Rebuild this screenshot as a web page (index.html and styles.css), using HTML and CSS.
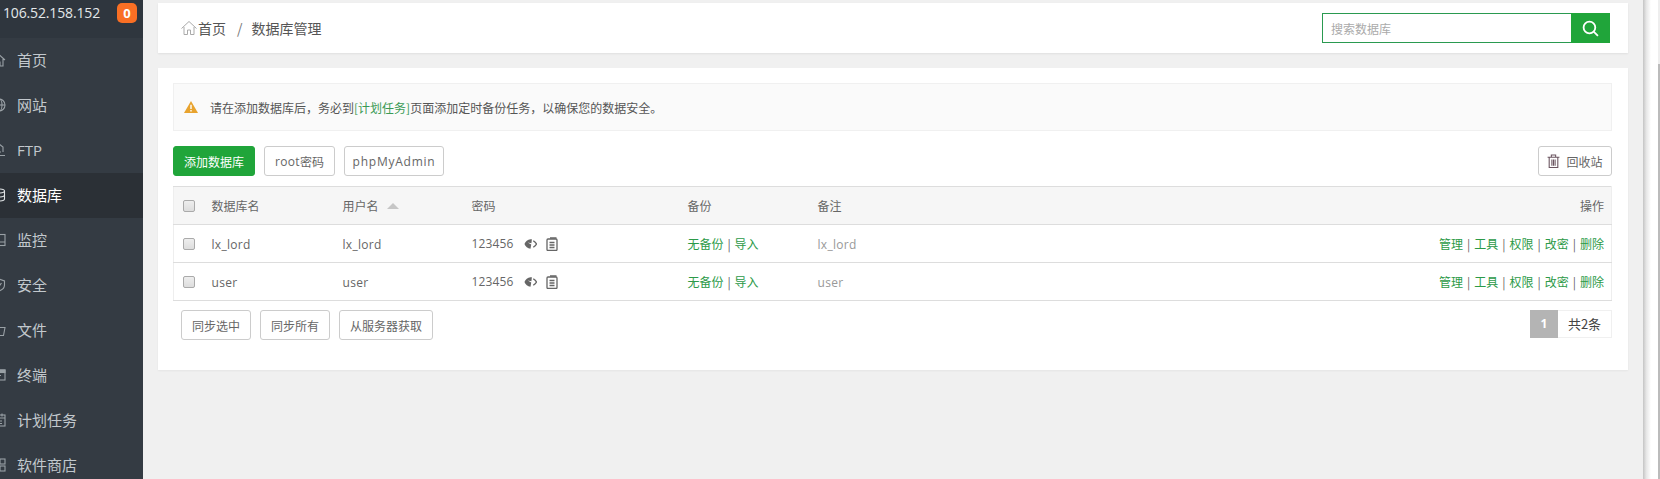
FILE: index.html
```html
<!DOCTYPE html>
<html lang="zh-CN">
<head>
<meta charset="utf-8">
<title>数据库管理</title>
<link rel="stylesheet" href="styles.css">
</head>
<body>
<aside class="sidebar">
  <div class="server"><span class="ip">106.52.158.152</span><span class="badge">0</span></div>
  <nav class="nav">
    <a class="nav-item"><svg class="nav-icon" viewBox="0 0 14 14"><path d="M1 7l6-5.500L13 7M3 6v7h3V9h2v4h3V6"/></svg>首页</a>
    <a class="nav-item"><svg class="nav-icon" viewBox="0 0 14 14"><circle cx="7" cy="7" r="6"/><ellipse cx="7" cy="7" rx="3" ry="6"/><path d="M1 7h12"/></svg>网站</a>
    <a class="nav-item"><svg class="nav-icon" viewBox="0 0 14 14"><path d="M3 9V4l4-3 4 3v5M1 12.500h12M5 9h4M7 3v5"/></svg><span class="lat-nav">FTP</span></a>
    <a class="nav-item active"><svg class="nav-icon" viewBox="0 0 14 14"><ellipse cx="7" cy="3" rx="5.500" ry="2"/><path d="M1.500 3v8c0 1 2.500 2 5.500 2s5.500-1 5.500-2V3M1.500 7c0 1 2.500 2 5.500 2s5.500-1 5.500-2"/></svg>数据库</a>
    <a class="nav-item"><svg class="nav-icon" viewBox="0 0 14 14"><rect x="1" y="1.500" width="12" height="11"/><path d="M1 9h12M4 12.500V9"/></svg>监控</a>
    <a class="nav-item"><svg class="nav-icon" viewBox="0 0 14 14"><path d="M7 1l5.500 2v4c0 3-2.500 5-5.500 6-3-1-5.500-3-5.500-6V3z"/><path d="M4.500 7l2 2 3-4"/></svg>安全</a>
    <a class="nav-item"><svg class="nav-icon" viewBox="0 0 14 14"><path d="M1 3h5l1.500 1.500H13l-1.500 8h-10z"/></svg>文件</a>
    <a class="nav-item"><svg class="nav-icon" viewBox="0 0 14 14"><rect class="fill" x="1" y="2" width="12" height="2.500"/><rect x="1" y="2" width="12" height="10"/><path d="M4 7.500h5"/></svg>终端</a>
    <a class="nav-item"><svg class="nav-icon" viewBox="0 0 14 14"><rect x="2" y="2" width="11" height="11"/><path d="M2 5h11M5 8h5M5 10.500h5M5 .5v3M10 .5v3"/></svg>计划任务</a>
    <a class="nav-item"><svg class="nav-icon" viewBox="0 0 14 14"><rect x="1" y="1" width="5" height="5"/><rect x="1" y="8" width="5" height="5"/><rect x="8" y="1" width="5" height="5"/><rect x="8" y="8" width="5" height="5"/></svg>软件商店</a>
  </nav>
</aside>

<main class="main">
  <header class="topbar">
    <div class="crumbs">
      <svg class="crumb-home" viewBox="0 0 16 16"><path d="M.5 8.500L8 1.500l7.500 7M3 7v7.500h3.500V10h3v4.500H13V7"/></svg>
      <span class="crumb-root">首页</span>
      <span class="crumb-sep">/</span>
      <span class="crumb-cur">数据库管理</span>
    </div>
    <form class="search">
      <input class="search-input" type="text" placeholder="搜索数据库">
      <button class="search-btn" type="button" aria-label="搜索"><svg class="search-icon" viewBox="0 0 16 16"><circle cx="7" cy="7" r="5.500"/><path d="M11 11l4 4"/></svg></button>
    </form>
  </header>

  <section class="card">
    <div class="alert">
      <svg class="warn" viewBox="0 0 14 12"><path class="warn-bg" d="M7 0l7 12H0z"/><path class="warn-fg" d="M6.300 3.800h1.400v4.200H6.300zM6.300 9h1.400v1.400H6.300z"/></svg>
      <span>请在添加数据库后，务必到<a class="link">[计划任务]</a>页面添加定时备份任务，以确保您的数据安全。</span>
    </div>

    <div class="toolbar">
      <button class="btn btn-primary btn-add" type="button">添加数据库</button>
      <button class="btn btn-root" type="button"><span class="lat">root</span>密码</button>
      <button class="btn btn-pma" type="button"><span class="lat lat-wide">phpMyAdmin</span></button>
      <button class="btn btn-recycle" type="button"><svg class="trash" viewBox="0 0 12 13"><path d="M.5 3h11M4 3V1h4v2M2 3v9.500h8V3M4.500 5v6M6 5v6M7.500 5v6"/></svg>回收站</button>
    </div>

    <table class="grid">
      <colgroup>
        <col class="c-check"><col class="c-name"><col class="c-user"><col class="c-pass"><col class="c-backup"><col class="c-note"><col class="c-ops">
      </colgroup>
      <thead>
        <tr>
          <th><input class="check" type="checkbox"></th>
          <th>数据库名</th>
          <th>用户名<span class="sort"></span></th>
          <th>密码</th>
          <th>备份</th>
          <th>备注</th>
          <th class="right">操作</th>
        </tr>
      </thead>
      <tbody>
        <tr>
          <td><input class="check" type="checkbox"></td>
          <td><span class="lat">lx_lord</span></td>
          <td><span class="lat">lx_lord</span></td>
          <td><div class="pass"><span class="lat lat-num">123456</span>
            <svg class="eye" viewBox="0 0 14 12"><path d="M7 1C4 1 1.500 3.500 .5 6c1 2.500 3.500 5 6.500 5l.8-4.500L4 4.500l4 .8L8.500 1z"/><path class="eye-r" d="M10 2.500c1.500 1 2.800 2.200 3.500 3.500-.7 1.300-2 2.500-3.500 3.500"/></svg>
            <svg class="copy" viewBox="0 0 12 14"><rect x="1" y="2" width="10" height="11.500" rx="1"/><path d="M4 1h6.500M3.500 5.500h5M3.500 8h5M3.500 10.500h5"/></svg>
          </div></td>
          <td class="backup"><a class="link">无备份</a> | <a class="link">导入</a></td>
          <td class="note"><span class="lat">lx_lord</span></td>
          <td class="right"><a class="link">管理</a> | <a class="link">工具</a> | <a class="link">权限</a> | <a class="link">改密</a> | <a class="link">删除</a></td>
        </tr>
        <tr>
          <td><input class="check" type="checkbox"></td>
          <td><span class="lat">user</span></td>
          <td><span class="lat">user</span></td>
          <td><div class="pass"><span class="lat lat-num">123456</span>
            <svg class="eye" viewBox="0 0 14 12"><path d="M7 1C4 1 1.500 3.500 .5 6c1 2.500 3.500 5 6.500 5l.8-4.500L4 4.500l4 .8L8.500 1z"/><path class="eye-r" d="M10 2.500c1.500 1 2.800 2.200 3.500 3.500-.7 1.300-2 2.500-3.500 3.500"/></svg>
            <svg class="copy" viewBox="0 0 12 14"><rect x="1" y="2" width="10" height="11.500" rx="1"/><path d="M4 1h6.500M3.500 5.500h5M3.500 8h5M3.500 10.500h5"/></svg>
          </div></td>
          <td class="backup"><a class="link">无备份</a> | <a class="link">导入</a></td>
          <td class="note"><span class="lat">user</span></td>
          <td class="right"><a class="link">管理</a> | <a class="link">工具</a> | <a class="link">权限</a> | <a class="link">改密</a> | <a class="link">删除</a></td>
        </tr>
      </tbody>
    </table>

    <div class="footer">
      <div class="footer-btns">
        <button class="btn" type="button">同步选中</button>
        <button class="btn" type="button">同步所有</button>
        <button class="btn" type="button">从服务器获取</button>
      </div>
      <div class="pager"><span class="page-cur">1</span><span class="page-total">共2条</span></div>
    </div>
  </section>
</main>

<div class="edge"><div class="edge-fade"></div><div class="edge-line"></div></div>
</body>
</html>
```

FILE: styles.css
```css
* { box-sizing: border-box; }
html, body { height: 100%; }
body {
  margin: 0;
  display: flex;
  height: 479px;
  overflow: hidden;
  background: #f0f0f0;
  color: #666;
  font: 12px "Noto Sans CJK SC", "Open Sans", sans-serif;
}
a { text-decoration: none; }
button { font: inherit; color: inherit; cursor: pointer; }

.lat { font-family: "Open Sans", "Noto Sans CJK SC", sans-serif; letter-spacing: .3px; }
.lat-wide { letter-spacing: .75px; }
.lat-num { letter-spacing: .15px; }

/* sidebar */
.sidebar { flex: 0 0 143px; background: #343b43; overflow: hidden; }
.server { height: 38px; display: flex; align-items: flex-start; background: #2f363e; padding: 3px 6px 0 3px; justify-content: space-between; }
.ip { font: 14px/20px "Open Sans", sans-serif; color: #e4e8ea; letter-spacing: -.15px; }
.badge { width: 20px; height: 20px; border-radius: 5px; background: #f96f24; color: #fff; font: bold 13px/20px "Open Sans", sans-serif; text-align: center; }
.nav-item { height: 45px; padding-bottom: 2px; display: flex; align-items: center; gap: 11px; color: #c2c8cd; font-size: 15px; }
.nav-item.active { background: #2b3036; color: #fff; }
.nav-icon { flex: none; width: 14px; height: 14px; margin-left: -8px; fill: none; stroke: #9aa1a6; stroke-width: 1.100; }
.nav-icon .fill { fill: #9aa1a6; }
.active .nav-icon { stroke: #dfe2e4; }
.lat-nav { font-family: "Open Sans", sans-serif; }

/* main */
.main { flex: 1; min-width: 0; padding: 3px 15px 0; }
.topbar { height: 50px; background: #fff; box-shadow: 0 1px 2px rgba(0,0,0,.07); display: flex; align-items: center; justify-content: space-between; padding: 0 18px 0 23px; }
.crumbs { display: flex; align-items: center; font-size: 14px; color: #555; }
.crumb-home { width: 16px; height: 16px; fill: none; stroke: #aaa; stroke-width: 1; margin-right: 1px; }
.crumb-sep { margin: 0 9px 0 11px; color: #777; }
.search { display: flex; height: 30px; }
.search-input { width: 249px; height: 30px; border: 1px solid #2a9a50; border-right: 0; outline: 0; padding: 0 8px; font: inherit; background: #fff; }
.search-input::placeholder { color: #aaa; }
.search-btn { width: 39px; border: 0; padding: 0; background: #20a53a; display: flex; align-items: center; justify-content: center; }
.search-icon { width: 17px; height: 17px; fill: none; stroke: #fff; stroke-width: 1.700; }

.card { margin-top: 15px; height: 302px; background: #fff; padding: 15px 16px 15px 15px; box-shadow: 0 1px 2px rgba(0,0,0,.05); }
.alert { height: 48px; display: flex; align-items: center; gap: 12px; padding-left: 10px; background: #fafafa; border: 1px solid #f0f0f0; color: #555; }
.warn { width: 14px; height: 12px; flex: none; }
.warn-bg { fill: #e8a32e; }
.warn-fg { fill: #fff; }
.link { color: #2c9a48; }
.alert .link { color: #3a9a55; }

.toolbar { display: flex; gap: 9px; margin-top: 15px; height: 30px; }
.btn { height: 30px; padding: 0 11px; background: #fff; border: 1px solid #ccc; border-radius: 3px; color: #666; white-space: nowrap; display: inline-flex; align-items: center; justify-content: center; }
.btn-primary { width: 82px; background: #20a53a; border-color: #20a53a; color: #fff; padding: 0; }
.btn-root { width: 71px; padding: 0; }
.btn-pma { width: 100px; padding: 0; }
.btn-recycle { width: 74px; padding: 0; margin-left: auto; gap: 6px; }
.trash { width: 13px; height: 14px; fill: none; stroke: #6b5560; stroke-width: 1; }

.grid { width: 100%; table-layout: fixed; border-collapse: collapse; margin-top: 10px; }
.c-check { width: 28px; }
.c-name { width: 131px; }
.c-user { width: 129px; }
.c-pass { width: 216px; }
.c-backup, .c-note { width: 130px; }
.grid th, .grid td { height: 38px; padding: 0 10px; text-align: left; font-weight: 400; color: #666; border-top: 1px solid #ddd; border-bottom: 1px solid #ddd; white-space: nowrap; }
.grid th:first-child, .grid td:first-child { padding: 0 0 0 9px; border-left: 1px solid #eee; }
.grid th:last-child, .grid td:last-child { border-right: 1px solid #eee; padding-right: 7px; word-spacing: 1.300px; }
.grid th { background: #f6f6f6; }
.grid .right { text-align: right; }
.grid .note { color: #999; }
.grid .backup { word-spacing: 1.200px; }
.check { appearance: none; display: block; width: 12px; height: 12px; margin: 0; border: 1px solid #aaa; border-radius: 2px; background: linear-gradient(#eee, #ddd); }
.sort { display: inline-block; margin-left: 8px; vertical-align: 2px; border: 6px solid transparent; border-top: 0; border-bottom: 6px solid #c6c6c6; }
.pass { display: flex; align-items: center; }
.eye { width: 13px; height: 12px; margin-left: 10px; fill: #666; }
.eye-r { fill: none; stroke: #666; stroke-width: 1.500; }
.copy { width: 12px; height: 14px; margin-left: 9px; fill: none; stroke: #666; stroke-width: 1.300; }

.footer { display: flex; justify-content: space-between; align-items: flex-start; margin-top: 9px; padding-left: 8px; }
.footer-btns { display: flex; gap: 9px; }
.footer-btns .btn { padding: 0 10px; }
.footer-btns .btn:nth-child(3) { width: 94px; }
.pager { display: flex; height: 28px; line-height: 28px; }
.page-cur { width: 28px; text-align: center; background: #b4b4b4; color: #fff; font-weight: 700; font-family: "Open Sans", sans-serif; }
.page-total { width: 54px; text-align: center; font-size: 13px; color: #444; border: 1px solid #f0f0f0; border-left: 0; line-height: 26px; }

/* neighbouring window edge */
.edge { flex: 0 0 17px; display: flex; background: #fff; }
.edge-fade { flex: 0 0 8px; background: linear-gradient(90deg, #c4c4c4, #e6e6e6 40%, #fff); }
.edge-line { margin-left: auto; width: 2px; padding-top: 64px; background: #eee; }
.edge-line::after { content: ""; display: block; height: 415px; background: #bbb; }
```
